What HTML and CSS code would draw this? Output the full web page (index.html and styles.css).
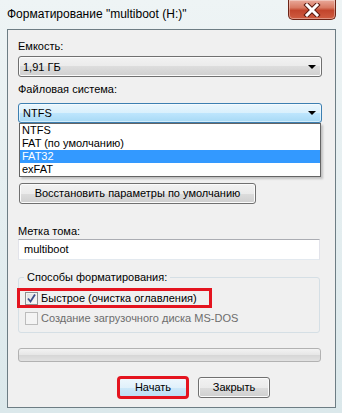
FILE: index.html
```html
<!DOCTYPE html>
<html lang="ru">
<head>
  <meta charset="UTF-8">
  <title>Форматирование "multiboot (H:)"</title>
  <meta name="viewport" content="width=device-width, initial-scale=1.0"/>
  <link rel="stylesheet" href="styles.css">
</head>
<body>
  <div class="window">
    <div class="titlebar">
      <span class="title">Форматирование "multiboot (H:)"</span>
      <div class="close">
        <svg width="20" height="14" viewBox="0 0 20 14">
          <path d="M5 2 L15 12 M15 2 L5 12" fill="none" stroke="#5a1a10" stroke-width="5" stroke-linecap="square"/>
          <path d="M5 2 L15 12 M15 2 L5 12" fill="none" stroke="#fff" stroke-width="3" stroke-linecap="square"/>
        </svg>
      </div>
    </div>

    <div class="client">
      <div class="lbl first">Емкость:</div>
      <div class="combo"><span>1,91 ГБ</span><i class="arrow"></i></div>

      <div class="lbl">Файловая система:</div>
      <div class="combo focus"><span>NTFS</span><i class="arrow"></i></div>
      <ul class="droplist">
        <li>NTFS</li>
        <li>FAT (по умолчанию)</li>
        <li class="sel">FAT32</li>
        <li>exFAT</li>
      </ul>

      <div class="btn restore">Восстановить параметры по умолчанию</div>

      <div class="lbl label-gap">Метка тома:</div>
      <div class="textbox">multiboot</div>

      <fieldset class="group">
        <legend>Способы форматирования:</legend>
        <div class="check marked">
          <span class="box">
            <svg width="11" height="11" viewBox="0 0 11 11">
              <path d="M2 5.5 L4.5 8.5 L9 1.5" fill="none" stroke="#3d4f8a" stroke-width="1.8"/>
            </svg>
          </span>
          Быстрое (очистка оглавления)
        </div>
        <div class="check disabled">
          <span class="box"></span>
          Создание загрузочного диска MS-DOS
        </div>
      </fieldset>

      <div class="progress"></div>

      <div class="actions">
        <div class="btn default marked">Начать</div>
        <div class="btn close-btn">Закрыть</div>
      </div>
    </div>
  </div>
</body>
</html>
```

FILE: styles.css
```css
body {
  margin: 0;
  font-family: 'Liberation Sans', Arial, sans-serif;
  font-size: 11px;
  color: #000;
  background: #dde8eb;
}
.window {
  width: 342px;
  height: 413px;
  box-sizing: border-box;
  padding: 0 6px 5px 7px;
  display: flex;
  flex-direction: column;
  background: linear-gradient(#eef4f5, #dbe8eb);
}
.titlebar {
  height: 29px;
  display: flex;
  justify-content: space-between;
  align-items: flex-start;
}
.title {
  font-size: 12px;
  padding-top: 7px;
}
.close {
  width: 48px;
  height: 20px;
  box-sizing: border-box;
  border: 1px solid #6b2416;
  border-top: none;
  border-radius: 0 0 5px 5px;
  background: linear-gradient(#e9a99a, #d87a63 40%, #c2452c 55%, #cf5d42);
  box-shadow: inset 0 0 0 1px rgba(255,255,255,0.35);
  display: flex;
  justify-content: center;
  align-items: center;
}
.client {
  flex: 1;
  border: 1px solid #6d7d84;
  background: #f0f0f0;
  padding: 9px 13px 9px 10px;
}
.lbl {
  height: 14px;
  line-height: 14px;
  margin-top: 5px;
}
.lbl.first {
  margin-top: 0;
}
.lbl.label-gap {
  margin-top: 20px;
}
.combo {
  height: 21px;
  box-sizing: border-box;
  margin-top: 3px;
  border: 1px solid #707070;
  border-radius: 3px;
  background: linear-gradient(#f2f2f2, #ebebeb 50%, #dddddd 50%, #cfcfcf);
  box-shadow: inset 0 0 0 1px #fbfbfb;
  display: flex;
  align-items: center;
  justify-content: space-between;
  padding: 0 4px 0 4px;
}
.combo.focus {
  height: 20px;
  margin-top: 7px;
  border-color: #3c7fb1;
  background: linear-gradient(#eaf6fd, #d9f0fc 50%, #bee6fd 50%, #a7d9f5);
  box-shadow: inset 0 0 0 1px rgba(255,255,255,0.5);
}
.combo span {
  line-height: 14px;
}
.arrow {
  width: 0;
  height: 0;
  border-left: 4px solid transparent;
  border-right: 4px solid transparent;
  border-top: 4px solid #000;
  margin-right: 1px;
}
.droplist {
  list-style: none;
  margin: 0 1px 0 1px;
  padding: 0;
  border: 1px solid #646464;
  background: #fff;
  box-shadow: 2px 2px 2px rgba(0,0,0,0.2);
}
.droplist li {
  height: 13px;
  line-height: 13px;
  padding-left: 2px;
}
.droplist li.sel {
  background: #3399ff;
  color: #fff;
}
.btn {
  height: 21px;
  box-sizing: border-box;
  border: 1px solid #707070;
  border-radius: 3px;
  background: linear-gradient(#f2f2f2, #ebebeb 50%, #dddddd 50%, #cfcfcf);
  box-shadow: inset 0 0 0 1px #fbfbfb;
  text-align: center;
  line-height: 19px;
}
.restore {
  width: 237px;
  margin: 6px 0 0 1px;
}
.textbox {
  height: 21px;
  box-sizing: border-box;
  margin: 1px 2px 0 0;
  border: 1px solid #e2e3ea;
  border-top-color: #abadb3;
  border-bottom-color: #e3e9ef;
  background: #fff;
  padding-left: 5px;
  line-height: 19px;
}
.group {
  margin: 10px 2px 0 0;
  padding: 0 0 6px 0;
  border: 1px solid #d5dfe5;
  border-radius: 3px;
  min-width: 0;
}
.group legend {
  margin-left: 5px;
  padding: 0 3px;
  line-height: 14px;
}
.check {
  height: 16px;
  box-sizing: border-box;
  padding-left: 6px;
  display: flex;
  align-items: center;
  gap: 3px;
  margin-top: 6px;
  white-space: nowrap;
}
.check.marked {
  width: 191px;
}
.check.disabled {
  margin-top: 4px;
  color: #6d6d6d;
}
.marked {
  outline: 3px solid #e4141f;
  outline-offset: -1px;
}
.box {
  width: 13px;
  height: 13px;
  box-sizing: border-box;
  border: 1px solid #8e8f8f;
  background: linear-gradient(135deg, #dcdcdc, #fdfdfd);
  box-shadow: inset 0 0 0 1px #f4f4f4;
  display: flex;
  align-items: center;
  justify-content: center;
}
.disabled .box {
  border-color: #bcbcbc;
  background: #f4f4f4;
  box-shadow: none;
}
.progress {
  height: 14px;
  box-sizing: border-box;
  margin: 15px 1px 0 0;
  border: 1px solid #b2b2b2;
  border-radius: 3px;
  background: linear-gradient(#f3f3f3, #e6e6e6 50%, #d6d6d6 50%, #e2e2e2);
}
.actions {
  display: flex;
  gap: 10px;
  margin-top: 15px;
  padding-left: 100px;
}
.actions .btn {
  width: 70px;
}
.actions .close-btn {
  width: 72px;
}
.btn.default {
  border-color: #3c7fb1;
  background: linear-gradient(#eef7fd, #e0f1fb 50%, #cde8f9 50%, #bcdff5);
  outline-offset: -2px;
}
```
